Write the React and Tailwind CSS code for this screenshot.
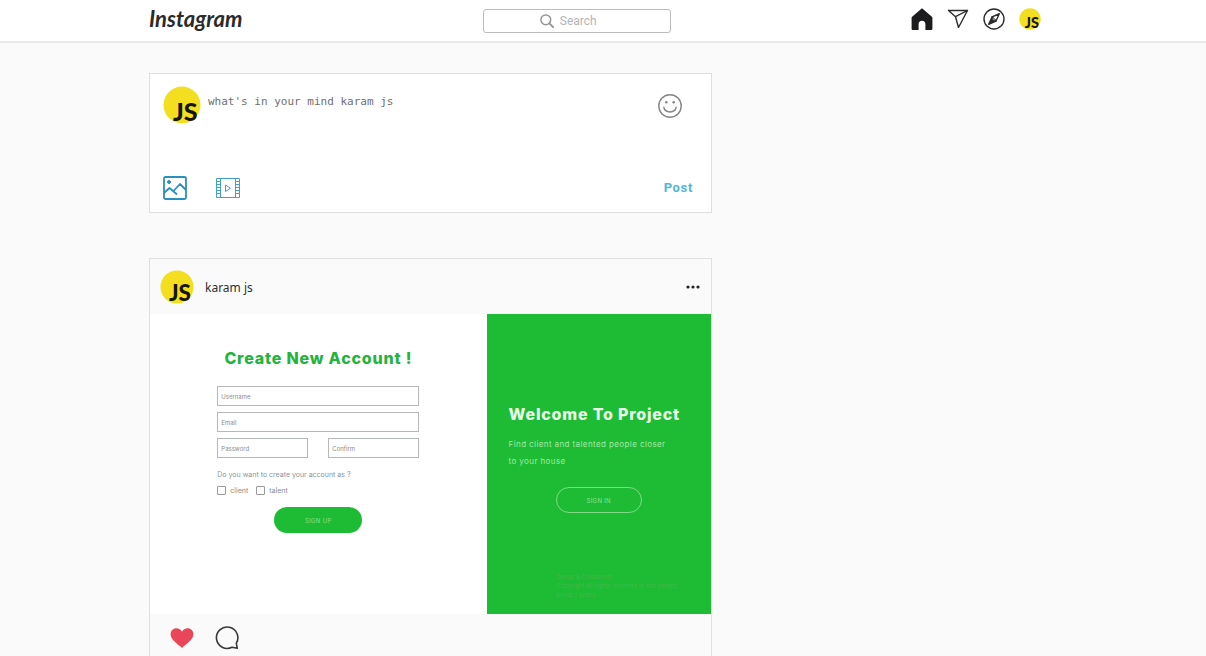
import { useId } from "react";

function Avatar({ className }) {
  return (
    <svg viewBox="0 0 38 38" className={`${className} overflow-visible`} role="img" aria-label="karam js">
      <circle cx="19" cy="19" r="18.5" fill="#f3df1f" />
      <text x="10" y="35" fontFamily="Lato, sans-serif" fontWeight="900" fontSize="25" fill="#161608">
        JS
      </text>
    </svg>
  );
}

function HomeIcon() {
  return (
    <svg viewBox="0 0 22 22" className="size-[22px]" fill="#1c1c1e">
      <path d="M11 .3 1.100 8.700c-.4.300-.5.700-.5 1.200v11.200c0 .5.300.8.8.8h6.200v-5.600c0-2.200 1.200-3.500 3.400-3.500s3.400 1.300 3.400 3.500v5.600h6.200c.5 0 .8-.3.8-.8V9.900c0-.5-.1-.9-.5-1.200z" />
    </svg>
  );
}

function SendIcon() {
  return (
    <svg viewBox="0 0 22 22" className="size-[22px]" fill="none" stroke="#2c2c2e" strokeWidth="1.4" strokeLinejoin="round" strokeLinecap="round">
      <path d="M1.500 2.500h19L11.500 19.500 8.500 8.700zM8.500 8.700l12-6.200M1.500 2.500l7 6.200" />
    </svg>
  );
}

function CompassIcon() {
  return (
    <svg viewBox="0 0 22 22" className="size-[22px]" fill="none" stroke="#2c2c2e" strokeWidth="1.400" strokeLinejoin="round">
      <circle cx="11" cy="11" r="10" />
      <path d="M16.300 5.700 13 13l-4-4z" fill="none" />
      <path d="M5.700 16.300 9 9l4 4z" fill="#2c2c2e" />
      <circle cx="11" cy="11" r="1" fill="#2c2c2e" stroke="#fff" strokeWidth=".5" />
    </svg>
  );
}

function SearchIcon() {
  return (
    <svg viewBox="0 0 14 14" className="size-[14px] shrink-0" fill="none" stroke="#969696" strokeWidth="1.500" strokeLinecap="round">
      <circle cx="5.800" cy="5.800" r="4.900" />
      <path d="m9.400 9.400 3.700 3.700" strokeWidth="2" />
    </svg>
  );
}

function SmileIcon() {
  return (
    <svg viewBox="0 0 24 24" className="size-6" fill="none" stroke="#858585" strokeWidth="1.400" strokeLinecap="round">
      <circle cx="12" cy="12" r="11.200" />
      <path d="M5.800 13.200c1 6.300 11.400 6.300 12.400 0" />
      <circle cx="8.300" cy="8.300" r="1.300" fill="#858585" stroke="none" />
      <circle cx="15.700" cy="8.300" r="1.300" fill="#858585" stroke="none" />
    </svg>
  );
}

function PictureIcon() {
  return (
    <svg viewBox="0 0 24 24" className="size-6" fill="none" stroke="#2a8fc0" strokeWidth="1.800" strokeLinejoin="round" strokeLinecap="round">
      <rect x="1" y="1" width="22" height="22" rx="1.500" />
      <circle cx="6" cy="6" r="1.500" fill="#2a8fc0" strokeWidth="1" />
      <path d="m1.500 16.500 5-4.500 7 6M10.500 15l6.500-7 5.500 5.500" />
    </svg>
  );
}

function VideoIcon() {
  return (
    <svg viewBox="0 0 24 24" className="size-6" fill="none" stroke="#3ea3c4">
      <path d="M.500 2.500h23v19H.500zM4.500 2.500v19M19.500 2.500v19" />
      <path d="M.500 5.500h4M.500 8.500h4M.500 11.500h4M.500 14.500h4M.500 17.500h4M19.500 5.500h4M19.500 8.500h4M19.500 11.500h4M19.500 14.500h4M19.500 17.500h4" />
      <path d="M9.500 9v6.500l5-3.250z" strokeLinejoin="round" />
    </svg>
  );
}

function HeartIcon() {
  return (
    <svg viewBox="0 0 24 24" className="size-6" fill="#e94658">
      <path d="M12 22C9.500 19.300.600 14.200.600 8.300.600 4.800 3.200 2.300 6.400 2.300c2.400 0 4.500 1.400 5.600 3.400 1.100-2 3.200-3.400 5.600-3.400 3.200 0 5.800 2.500 5.800 6C23.400 14.200 14.500 19.300 12 22z" />
    </svg>
  );
}

function CommentIcon() {
  return (
    <svg viewBox="0 0 24 24" className="size-6" fill="none" stroke="#38383a" strokeWidth="1.600" strokeLinejoin="round">
      <path d="M22.300 22.300l-1-5A10.700 10.700 0 1 0 17 21.300z" />
    </svg>
  );
}

function Header() {
  return (
    <header className="border-b-2 border-[#e9e9e9] bg-white">
      <div className="mx-auto flex h-[41px] max-w-[908px] items-center justify-between pr-4">
        <a href="#home" className="pb-1 font-[Lato,cursive] text-[22px] leading-6 font-bold text-[#2b2b2b] italic">
          Instagram
        </a>
        <label className="flex h-6 w-[188px] items-center gap-[6px] rounded-[3px] border border-[#bcbcbc] pl-14">
          <SearchIcon />
          <input
            type="search"
            aria-label="Search"
            placeholder="Search"
            className="w-full min-w-0 bg-transparent font-[Roboto,sans-serif] text-xs outline-none placeholder:text-[#b4b4b4]"
          />
        </label>
        <nav className="flex items-center gap-[14px] pb-1">
          <a href="#home" aria-label="Home"><HomeIcon /></a>
          <a href="#messages" aria-label="Messages"><SendIcon /></a>
          <a href="#explore" aria-label="Explore"><CompassIcon /></a>
          <a href="#profile" aria-label="Profile"><Avatar className="size-[22px]" /></a>
        </nav>
      </div>
    </header>
  );
}

function Composer() {
  return (
    <form className="border border-[#dedede] bg-white pt-3 pr-[18px] pb-3 pl-[13px]">
      <div className="flex items-start gap-[7px]">
        <Avatar className="size-[38px] shrink-0" />
        <textarea
          aria-label="New post"
          placeholder="what's in your mind karam js"
          rows={4}
          className="h-[78px] min-w-0 flex-1 resize-none bg-transparent pt-2 font-['DejaVu_Sans_Mono',monospace] text-[11px] leading-4 outline-none placeholder:text-[#707070]"
        />
        <button type="button" aria-label="Add emoji" className="mt-2 mr-[11px]"><SmileIcon /></button>
      </div>
      <div className="mt-3 flex items-center">
        <button type="button" aria-label="Add photo"><PictureIcon /></button>
        <button type="button" aria-label="Add video" className="ml-[29px]"><VideoIcon /></button>
        <button type="submit" className="ml-auto font-[Roboto,sans-serif] text-[13px] leading-5 font-bold tracking-wider text-[#55b5d3]">
          Post
        </button>
      </div>
    </form>
  );
}

function Field({ label, type = "text" }) {
  return (
    <input
      type={type}
      aria-label={label}
      placeholder={label}
      className="h-5 w-full min-w-0 border border-[#b4b9b7] bg-white px-[3px] text-[6px] outline-none placeholder:text-[#8b8b8b]"
    />
  );
}

function Check({ label }) {
  const id = useId();
  return (
    <div className="flex items-center gap-1">
      <input id={id} type="checkbox" className="size-[9px] appearance-none rounded-[1px] border border-[#9a9a9a]" />
      <label htmlFor={id} className="text-[7px] leading-[9px] text-[#8c8c8c]">{label}</label>
    </div>
  );
}

function SignUpPreview() {
  return (
    <div className="grid grid-cols-[3fr_2fr] font-[Inter,sans-serif]">
      <form className="flex h-[300px] flex-col items-center bg-white pt-8">
        <h2 className="text-base leading-6 font-extrabold tracking-wider text-[#25b23d]">Create New Account !</h2>
        <div className="mt-4 flex w-3/5 flex-col gap-[6px]">
          <Field label="Username" />
          <Field label="Email" type="email" />
          <div className="grid grid-cols-2 gap-5">
            <Field label="Password" type="password" />
            <Field label="Confirm" type="password" />
          </div>
        </div>
        <div className="mt-3 w-3/5">
          <p className="text-[7px] leading-[10px] text-[#8795a0]">Do you want to create your account as ?</p>
          <div className="mt-[6px] flex gap-2">
            <Check label="client" />
            <Check label="talent" />
          </div>
        </div>
        <button type="button" className="mt-3 h-[26px] w-[88px] rounded-full bg-[#1dbc34] text-[6px] tracking-wider text-[#8be08f]">
          SIGN UP
        </button>
      </form>
      <section className="flex flex-col bg-[#1dbc34] px-[22px] pt-[88px]">
        <h2 className="text-base leading-6 font-extrabold tracking-wider whitespace-nowrap text-[#e9fbe7]">Welcome To Project</h2>
        <p className="mt-[10px] text-[8px] leading-[17px] tracking-wider whitespace-nowrap text-[#a5e8a5]">
          Find client and talented people closer
          <br />
          to your house
        </p>
        <button type="button" className="mt-[17px] h-[26px] w-[86px] self-center rounded-full border border-[#7fdc84] text-[6px] tracking-wider text-[#8fe292]">
          SIGN IN
        </button>
        <p className="mt-[59px] ml-12 text-[6px] leading-[9px] whitespace-nowrap text-[#43b84a]">
          Terms &amp; Conditions
          <br />
          Copyright all rights reserved to this project
          <br />
          privacy policy
        </p>
      </section>
    </div>
  );
}

function Post() {
  return (
    <article className="border border-[#e0e0e0]">
      <header className="flex h-[55px] items-center pr-[11px] pl-[10px]">
        <Avatar className="size-[34px]" />
        <a href="#profile" className="ml-[11px] pt-[2px] font-['Noto_Sans',sans-serif] text-xs text-[#303030]">karam js</a>
        <button type="button" aria-label="More options" className="ml-auto">
          <svg viewBox="0 0 14 4" className="h-1 w-[14px]" fill="#242424">
            <circle cx="2" cy="2" r="1.600" />
            <circle cx="7" cy="2" r="1.600" />
            <circle cx="12" cy="2" r="1.600" />
          </svg>
        </button>
      </header>
      <SignUpPreview />
      <footer className="flex items-center gap-[21px] py-3 pl-5">
        <button type="button" aria-label="Like"><HeartIcon /></button>
        <button type="button" aria-label="Comment"><CommentIcon /></button>
      </footer>
    </article>
  );
}

export default function App() {
  return (
    <div className="h-screen overflow-hidden bg-[#fafafa]">
      <Header />
      <main className="mx-auto max-w-[908px] pt-[30px]">
        <div className="flex w-[62%] flex-col gap-[45px]">
          <Composer />
          <Post />
        </div>
      </main>
    </div>
  );
}
